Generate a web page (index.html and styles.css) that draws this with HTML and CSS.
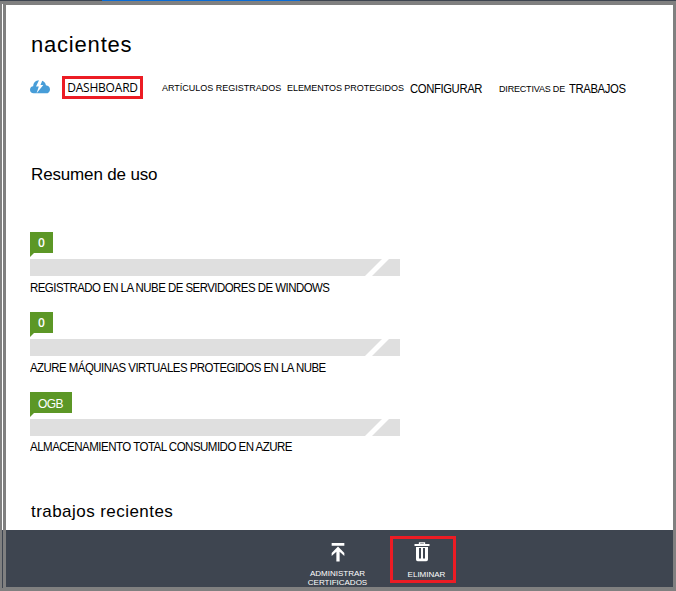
FILE: index.html
```html
<!DOCTYPE html>
<html lang="es">
<head>
<meta charset="utf-8">
<title>nacientes</title>
<link rel="stylesheet" href="styles.css">
</head>
<body>
<div class="topline"><div class="progress"></div></div>
<div class="frame">
  <div class="rail"></div>
  <div class="window">
    <main class="content">
      <h1><span>nacientes</span></h1>
      <nav class="tabs">
        <svg class="cloud" width="20" height="14" viewBox="0 0 20 14"><path fill="#479dd8" d="M3.500 13.300C1.400 13.300 0 11.800 0 9.800C0 7.900 1.300 6.500 3.200 6.300C3.400 2.600 5.500 .300 9 .200L6 6.500H8.800L6.600 13.300ZM6.600 13.300L13.300 5H10.500L12.200 .700C14.200 1.400 15.700 3 15.900 5.300C18.300 5.500 20 7 20 9.400C20 11.800 18.400 13.300 16 13.300Z"/></svg>
        <a class="tab active"><span>DASHBOARD</span></a>
        <a class="tab small articles"><span>ARTÍCULOS REGISTRADOS</span></a>
        <a class="tab small elements"><span>ELEMENTOS PROTEGIDOS</span></a>
        <a class="tab configure"><span class="narrow">CONFIGURAR</span></a>
        <a class="tab jobs"><span class="small policy">DIRECTIVAS DE</span><span class="narrow">TRABAJOS</span></a>
      </nav>
      <h2><span>Resumen de uso</span></h2>
      <section class="usage">
        <div class="meter">
          <div class="badge">0</div>
          <div class="bar"></div>
          <p><span>REGISTRADO EN LA NUBE DE SERVIDORES DE WINDOWS</span></p>
        </div>
        <div class="meter">
          <div class="badge">0</div>
          <div class="bar"></div>
          <p><span>AZURE MÁQUINAS VIRTUALES PROTEGIDOS EN LA NUBE</span></p>
        </div>
        <div class="meter">
          <div class="badge wide">OGB</div>
          <div class="bar"></div>
          <p class="last"><span>ALMACENAMIENTO TOTAL CONSUMIDO EN AZURE</span></p>
        </div>
      </section>
      <h2 class="recent"><span>trabajos recientes</span></h2>
    </main>
    <footer class="commands">
      <button class="command manage">
        <svg width="16" height="21" viewBox="0 0 16 21"><path fill="#fff" d="M1 0H15V3H1ZM8 4L15 11V14.500L9.800 9.800V20.500H6.200V9.800L1 14.500V11Z"/></svg>
        <span>ADMINISTRAR<br>CERTIFICADOS</span>
      </button>
      <button class="command delete">
        <svg width="16" height="20" viewBox="0 0 16 20"><path fill="none" stroke="#fff" stroke-width="1.300" d="M5.500 2V.800H10.500V2"/><path fill="#fff" fill-rule="evenodd" d="M.500 2H15.500V4H.500ZM2 5H14V17.500Q14 19.200 12.300 19.200H3.700Q2 19.200 2 17.500ZM5 6V16.500H7V6ZM9 6V16.500H11V6Z"/></svg>
        <span>ELIMINAR</span>
      </button>
    </footer>
  </div>
</div>
</body>
</html>
```
FILE: styles.css
```css
* { box-sizing: border-box; }
body {
  margin: 0;
  width: 676px;
  height: 591px;
  overflow: hidden;
  display: flex;
  flex-direction: column;
  background: #808080;
  color: #000;
  font-family: "Liberation Sans", Arial, sans-serif;
}
h1, h2, p { margin: 0; font-weight: 400; white-space: nowrap; }
.topline { height: 1px; background: #3e4550; }
.progress { width: 198px; height: 1px; margin-left: 102px; background: #0a6cd6; }
.frame { flex: 1; display: flex; padding: 3px 3px 0 2px; }
.rail { width: 1px; height: 584px; background: linear-gradient(#fff 526px, #3e4550 526px); }
.window { width: 667px; height: 582px; margin: 1px 0 0 3px; display: flex; flex-direction: column; background: #fff; }
.content { height: 525px; padding-left: 24px; }
h1 { padding: 27px 0 0 1px; font-size: 22px; line-height: 26px; letter-spacing: 0.800px; }
.tabs { display: flex; align-items: center; height: 24px; margin-top: 18px; white-space: nowrap; }
.cloud { flex: none; margin-top: -3px; }
.tab { flex: none; font-size: 12px; line-height: 16px; }
.active {
  width: 81px; height: 23px; margin: -1px 0 0 12px;
  border: 3px solid #ec1c24;
  display: flex; justify-content: center;
  font: 12px/17px "Open Sans", sans-serif;
  letter-spacing: -0.2px;
}
.small { font-size: 9px; line-height: 17px; }
.articles { width: 125px; margin-left: 19px; }
.elements { width: 123px; letter-spacing: -0.050px; }
.configure { width: 89px; padding-top: 1px; }
.jobs { display: flex; padding-top: 2px; }
.policy { width: 70px; letter-spacing: -0.180px; }
.narrow { display: inline-block; transform: scaleX(0.94); transform-origin: left; letter-spacing: -0.400px; }
h2 { padding-left: 1px; margin-top: 65px; font-size: 17px; line-height: 20px; letter-spacing: -0.150px; }
.usage { width: 370px; margin-top: 47px; }
.meter { height: 80px; }
.badge {
  position: relative;
  width: 23px; height: 21px;
  background: #5c9726;
  color: #fff;
  text-align: center;
  font: 600 12px/22px "Open Sans", sans-serif;
}
.badge::after {
  content: "";
  position: absolute;
  left: 0; top: 21px;
  width: 4px; height: 4px;
  background: #5c9726;
  clip-path: polygon(0 0, 100% 0, 0 100%);
}
.wide { width: 42px; padding-right: 1px; font: 12px/24px "Liberation Sans", Arial, sans-serif; letter-spacing: -0.500px; }
.bar {
  height: 17px; margin-top: 6px;
  background: #dfdfdf;
}
.bar::after {
  content: "";
  display: block;
  width: 24px; height: 17px; margin-left: 335px;
  background: #fff;
  clip-path: polygon(17px 0, 24px 0, 7px 17px, 0 17px);
}
.meter p { font-size: 12px; line-height: 16px; padding-top: 4px; letter-spacing: -0.550px; transform: scaleX(0.954); transform-origin: left; }
.meter .last { padding-top: 3px; transform: scaleX(0.961); }
.recent { margin-top: 30px; font-size: 17px; letter-spacing: 0.450px; }
.commands { height: 57px; display: flex; background: #3e4550; }
.command {
  display: flex; flex-direction: column; align-items: center;
  margin: 0; padding: 0; border: 0; background: none; color: #fff;
  font: 8px/9px "Liberation Sans", Arial, sans-serif;
}
.manage { width: 70px; height: 57px; margin-left: 296px; padding-top: 13px; }
.manage svg { margin-left: 2px; }
.manage span { margin-top: 7px; padding-left: 1px; }
.delete { width: 66px; height: 47px; margin: 6px 0 0 18px; padding-top: 3px; border: 3px solid #ec1c24; }
.delete svg { margin-right: 2px; }
.delete span { margin: 8px 0 0 7px; }
```
